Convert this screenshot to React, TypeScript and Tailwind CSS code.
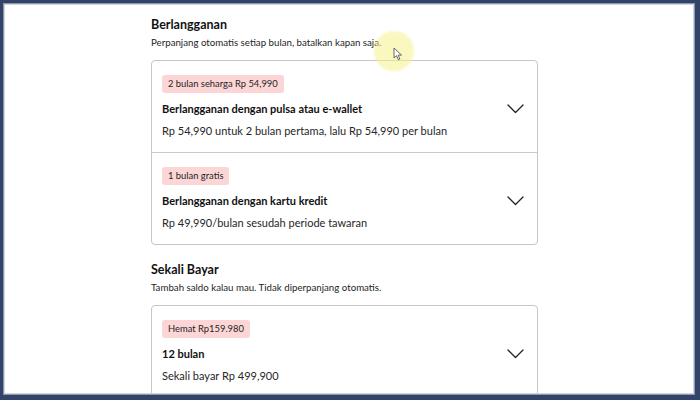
import React from "react"

type Plan = {
  badge: string
  title: string
  desc: string
}

const subscribe: Plan[] = [
  {
    badge: "2 bulan seharga Rp 54,990",
    title: "Berlangganan dengan pulsa atau e-wallet",
    desc: "Rp 54,990 untuk 2 bulan pertama, lalu Rp 54,990 per bulan",
  },
  {
    badge: "1 bulan gratis",
    title: "Berlangganan dengan kartu kredit",
    desc: "Rp 49,990/bulan sesudah periode tawaran",
  },
]

const oneTime: Plan[] = [
  {
    badge: "Hemat Rp159.980",
    title: "12 bulan",
    desc: "Sekali bayar Rp 499,900",
  },
]

function Chevron() {
  return (
    <svg width="17" height="10" viewBox="0 0 17 10" fill="none" className="shrink-0">
      <path d="M1 1l7.5 7.5L16 1" stroke="#222" strokeWidth="1.3" strokeLinecap="round" strokeLinejoin="round" />
    </svg>
  )
}

function PlanRow({ plan, last }: { plan: Plan; last: boolean }) {
  return (
    <div className={last ? "px-[10px] pt-[14px] pb-[13px]" : "border-b border-[#c9c9c9] px-[10px] pt-[14px] pb-[13px]"}>
      <div className="flex">
        <span className="flex h-[18px] items-center rounded-[3px] bg-[#fcd6d6] px-[6px] text-[9.4px] text-[#1f1f1f]">
          {plan.badge}
        </span>
      </div>
      <div className="mt-[8px] flex items-center justify-between pr-[3px]">
        <div className="text-[11px] font-bold leading-[16px] text-[#111]">{plan.title}</div>
        <Chevron />
      </div>
      <div className="mt-[6px] text-[11px] leading-[16px] text-[#262626]">{plan.desc}</div>
    </div>
  )
}

function Section({ title, sub, plans }: { title: string; sub: string; plans: Plan[] }) {
  return (
    <div>
      <div className="text-[12.5px] font-bold leading-[18px] text-[#121212]">{title}</div>
      <div className="mt-[1px] text-[9.7px] leading-[14px] text-[#1e1e1e]">{sub}</div>
      <div className="mt-[11px] rounded-[4px] border border-[#c6c6c6] bg-white">
        {plans.map((p, i) => (
          <PlanRow key={p.title} plan={p} last={i === plans.length - 1} />
        ))}
      </div>
    </div>
  )
}

export default function App() {
  return (
    <div className="h-[400px] w-[700px] overflow-hidden bg-[#33446a] pl-[3px] pt-[3px] pr-[5px] pb-[5px] font-['Lato',sans-serif]">
      <div className="h-full w-full border-[1px] border-[#8d97ab]">
        <div className="relative h-full w-full overflow-hidden border-[1px] border-[#d3d7de] bg-white">
          <div className="ml-[146px] flex w-[387px] flex-col gap-[16px] pt-[11px]">
            <Section
              title="Berlangganan"
              sub="Perpanjang otomatis setiap bulan, batalkan kapan saja."
              plans={subscribe}
            />
            <Section
              title="Sekali Bayar"
              sub="Tambah saldo kalau mau. Tidak diperpanjang otomatis."
              plans={oneTime}
            />
          </div>
          {/* cursor highlight */}
          <div className="absolute left-[369px] top-[26px] h-[40px] w-[40px] rounded-full bg-[#f6f08a]/55 blur-[1px]" />
          <svg className="absolute left-[388px] top-[42px]" width="10" height="14" viewBox="0 0 10 14">
            <path d="M1 1v10l2.5-2.3 1.8 4 1.6-.7-1.8-3.9H8.5z" fill="#fff" stroke="#555" strokeWidth="0.9" strokeLinejoin="round" />
          </svg>
        </div>
      </div>
    </div>
  )
}
